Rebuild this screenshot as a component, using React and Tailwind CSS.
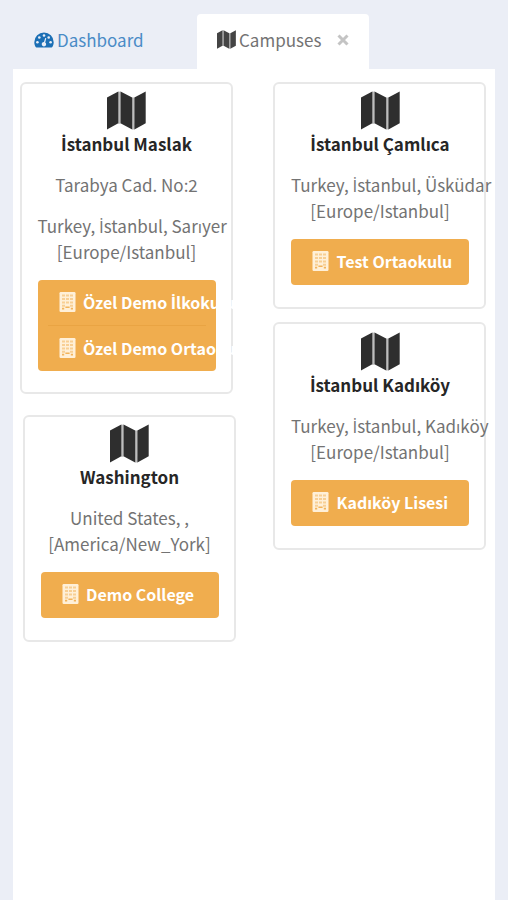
const campuses = {
  left: [
    {
      name: "İstanbul Maslak",
      address: "Tarabya Cad. No:2",
      region: "Turkey, İstanbul, Sarıyer",
      timezone: "[Europe/Istanbul]",
      schools: ["Özel Demo İlkokulu", "Özel Demo Ortaokulu"],
      className: "h-[312px] pl-[15.5px] pt-[6px]",
    },
    {
      name: "Washington",
      region: "United States, ,",
      timezone: "[America/New_York]",
      schools: ["Demo College"],
      className: "h-[227px] mt-[21px] ml-[3px] pl-[15.5px] pt-[6px]",
    },
  ],
  right: [
    {
      name: "İstanbul Çamlıca",
      region: "Turkey, İstanbul, Üsküdar",
      timezone: "[Europe/Istanbul]",
      schools: ["Test Ortaokulu"],
      className: "h-[227px] pl-4 pt-[6px]",
    },
    {
      name: "İstanbul Kadıköy",
      region: "Turkey, İstanbul, Kadıköy",
      timezone: "[Europe/Istanbul]",
      schools: ["Kadıköy Lisesi"],
      className: "h-[228px] mt-[13px] pl-4 pt-[7px]",
    },
  ],
};

// The CJK family has no dotted capital I, so that letter takes another family
const Turkish = ({ children }) =>
  children.split(/(İ)/).map((part, index) =>
    part === "İ" ? (
      <span key={index} className="font-['Open_Sans',sans-serif] leading-none">
        İ
      </span>
    ) : (
      part
    )
  );

const MapIcon = ({ className }) => (
  <svg viewBox="0 0 39 39" className={className}>
    <path fill="#bdbdbd" d="M11 0.8 13.5 0.5V32.8L11 32.7ZM25 6.5H27.5V38.5H25Z" />
    <g fill="currentColor">
      <path d="M0 6.5 11.3 0.5V32.2L0 38.5Z" />
      <path d="M13.5 0.5 25.2 6.5V38.5L13.5 32.2Z" />
      <path d="M27.4 6.5 38.7 0.5V32.2L27.4 38.5Z" />
    </g>
  </svg>
);

const GaugeIcon = ({ className }) => (
  <svg viewBox="0 0 20 16" className={className}>
    <path
      fill="currentColor"
      d="M10 0.5A9.7 9.7 0 0 0 0.3 10.2C0.3 12 0.8 13.7 1.7 15.1C1.9 15.4 2.1 15.5 2.4 15.5H17.6C17.9 15.5 18.1 15.4 18.3 15.1C19.2 13.7 19.7 12 19.7 10.2A9.7 9.7 0 0 0 10 0.5Z"
    />
    <g className="fill-[#ebeef6]">
      <circle cx="3.4" cy="10.2" r="1.3" />
      <circle cx="5.3" cy="5.5" r="1.3" />
      <circle cx="10" cy="3.5" r="1.3" />
      <circle cx="14.7" cy="5.5" r="1.3" />
      <circle cx="16.6" cy="10.2" r="1.3" />
      <path d="M11.2 6 12.3 6.3 11.2 10.4A2.2 2.2 0 1 1 10 10Z" />
    </g>
  </svg>
);

const BuildingIcon = ({ className }) => (
  <svg viewBox="0 0 17 20" className={className}>
    <rect x="0.5" y="0" width="16" height="20" rx="1.2" fill="#fff0d8" />
    <g fill="#f8cf94">
      <path d="M3 2.6h3v2H3zM7 2.6h3v2H7zM11 2.6h3v2h-3z" />
      <path d="M3 6h3v2H3zM7 6h3v2H7zM11 6h3v2h-3z" />
      <path d="M3 9.4h3v2H3zM7 9.4h3v2H7zM11 9.4h3v2h-3z" />
      <path d="M3 12.8h3v2H3zM11 12.8h3v2h-3z" />
    </g>
    <path fill="#f2b45c" d="M3 15.8h2.2v1.8H3zM11.8 15.8H14v1.8h-2.2zM6.4 14.6h4.2v1.4H6.4z" />
  </svg>
);

const SchoolMenu = ({ schools }) => (
  <div className="w-[178px] rounded-[4px] bg-[#f0ad4e]">
    {schools.map((school, index) => (
      <div key={school}>
        {index > 0 && <div className="mx-[10px] h-px bg-[#e9a443]" />}
        <div className="flex h-[45px] items-center pb-px pl-[21px]">
          <BuildingIcon className="h-5 w-[17px] shrink-0" />
          <span className="-mt-px ml-[7.5px] whitespace-nowrap text-[16px] font-bold leading-[26px] text-white">
            <Turkish>{school}</Turkish>
          </span>
        </div>
        {schools.length === 1 && <div className="h-px" />}
      </div>
    ))}
  </div>
);

const CampusCard = ({ campus }) => (
  <section
    className={`w-[213px] rounded-[6px] border-2 border-[#e8e8e8] ${campus.className}`}
  >
    <div className="w-[178px]">
      <MapIcon className="ml-[69.5px] h-[41px] w-[39px] text-[#2e2e2e]" />
      <h2 className="h-[26px] text-center text-[17px] font-bold leading-[26px] text-[#262626]">
        <Turkish>{campus.name}</Turkish>
      </h2>
      {campus.address && (
        <p className="mt-[15px] text-center text-[17px] leading-[26px]">{campus.address}</p>
      )}
      <div className="mb-[15px] mt-[15px] h-[52px] whitespace-nowrap text-center text-[17px] leading-[26px]">
        <p>
          <Turkish>{campus.region}</Turkish>
        </p>
        <p>{campus.timezone}</p>
      </div>
      <SchoolMenu schools={campus.schools} />
    </div>
  </section>
);

const App = () => {
  return (
    <div className="h-[900px] w-[508px] overflow-hidden bg-[#ebeef6] px-[13px] pt-[14px] font-['Noto_Sans_CJK_SC','Open_Sans',sans-serif] text-[#737373]">
      <nav className="flex h-[55px] text-[17px] leading-[26px]">
        <a className="flex w-[184px] items-center pb-[3px] pl-[21px] text-[#4a8bc6]">
          <GaugeIcon className="h-4 w-5 text-[#1c6fb5]" />
          <span className="ml-[3px]">Dashboard</span>
        </a>
        <a className="flex w-[172px] items-center rounded-t-[4px] bg-white pb-[3px] pl-5">
          <MapIcon className="mb-[2px] h-[19px] w-[19px] text-[#444]" />
          <span className="ml-[3px]">Campuses</span>
          <svg viewBox="0 0 12 12" className="ml-4 h-3 w-3" stroke="#c4c4c4" strokeWidth="3">
            <path d="M1.5 1.5 10.5 10.5M10.5 1.5 1.5 10.5" />
          </svg>
        </a>
      </nav>
      <main className="flex h-[831px] w-[482px] gap-[37px] bg-white pl-[7px] pt-[13px]">
        <div className="w-[216px]">
          {campuses.left.map((campus) => (
            <CampusCard key={campus.name} campus={campus} />
          ))}
        </div>
        <div className="w-[213px]">
          {campuses.right.map((campus) => (
            <CampusCard key={campus.name} campus={campus} />
          ))}
        </div>
      </main>
    </div>
  );
};

export default App;
